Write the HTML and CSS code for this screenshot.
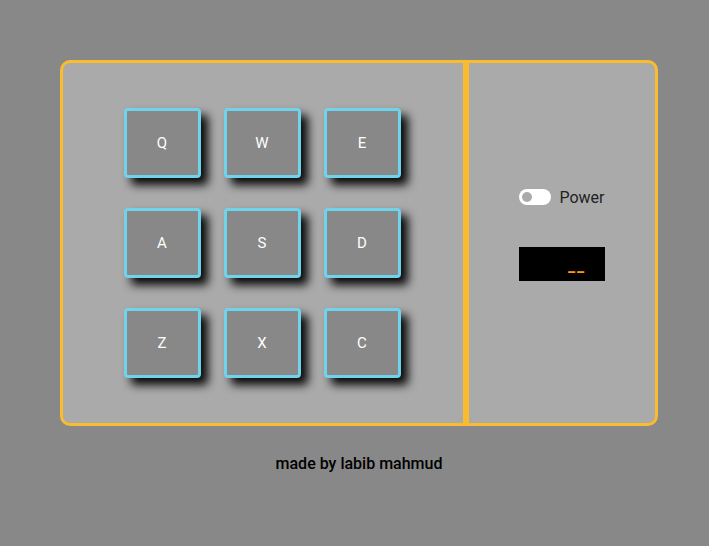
FILE: index.html
```html
<!DOCTYPE html>
<html>
<head>
<meta charset="utf-8">
<link rel="stylesheet" href="styles.css">
</head>
<body>
<div class="wrap">
  <div class="machine">
    <div class="pad">
      <div class="key">Q</div>
      <div class="key">W</div>
      <div class="key">E</div>
      <div class="key">A</div>
      <div class="key">S</div>
      <div class="key">D</div>
      <div class="key">Z</div>
      <div class="key">X</div>
      <div class="key">C</div>
    </div>
    <div class="controls">
      <div class="power">
        <span class="switch"><span class="knob"></span></span>
        <span class="label">Power</span>
      </div>
      <div class="display">__</div>
    </div>
  </div>
  <p class="credit">made by labib mahmud</p>
</div>
</body>
</html>
```
FILE: styles.css
```css
html, body {
  margin: 0;
  padding: 0;
  background: #888888;
  font-family: Roboto, "Liberation Sans", sans-serif;
}
.wrap {
  width: 598px;
  padding: 60px 0 0 60px;
}
.machine {
  box-sizing: border-box;
  width: 598px;
  height: 366px;
  border: 3px solid #fbbb2e;
  border-radius: 10px;
  background: #aaaaaa;
  display: flex;
  overflow: hidden;
}
.pad {
  box-sizing: border-box;
  width: 406px;
  flex: none;
  padding-right: 2px;
  border-right: 6px solid #fbbb2e;
  display: grid;
  grid-template-columns: repeat(3, 77px);
  grid-auto-rows: 70px;
  column-gap: 23px;
  row-gap: 30px;
  justify-content: center;
  align-content: center;
}
.key {
  box-sizing: border-box;
  border: 3px solid #6fd3eb;
  border-radius: 4px;
  background: #888888;
  color: #ffffff;
  font-size: 15px;
  display: flex;
  align-items: center;
  justify-content: center;
  box-shadow: 7px 7px 10px rgba(0, 0, 0, 0.95);
}
.controls {
  flex: 1;
  display: flex;
  flex-direction: column;
  align-items: center;
  justify-content: center;
  gap: 40px;
  padding-bottom: 18px;
}
.power {
  display: flex;
  align-items: center;
  gap: 8px;
}
.switch {
  width: 32px;
  height: 16px;
  border-radius: 8px;
  background: #ffffff;
  display: flex;
  align-items: center;
  padding-left: 3px;
  box-sizing: border-box;
}
.knob {
  width: 10px;
  height: 10px;
  border-radius: 50%;
  background: #aaaaaa;
}
.label {
  font-size: 16px;
  color: #222222;
}
.display {
  width: 86px;
  height: 34px;
  background: #000000;
  color: #ff9a00;
  font-size: 16px;
  font-weight: 700;
  line-height: 34px;
  text-align: center;
  padding: 2px 0 0 30px;
  box-sizing: border-box;
  letter-spacing: 2px;
}
.credit {
  margin: 28px 0 0;
  text-align: center;
  font-size: 16px;
  font-weight: 500;
  color: #000000;
}
```
